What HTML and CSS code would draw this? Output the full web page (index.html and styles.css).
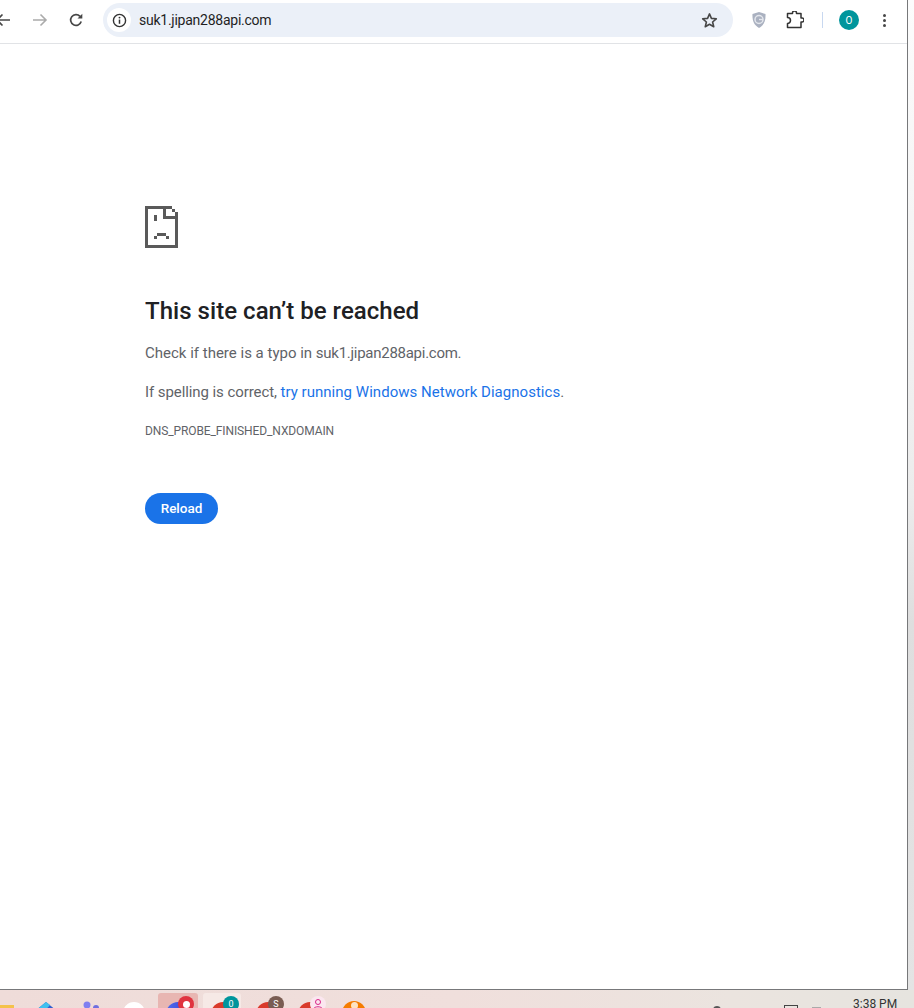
FILE: index.html
```html
<!DOCTYPE html>
<html lang="en">
<head>
<meta charset="utf-8">
<title>suk1.jipan288api.com</title>
<link rel="stylesheet" href="styles.css">
</head>
<body>
<div class="desktop">
  <div class="browser">
    <header class="toolbar">
      <svg class="nav nav-back" viewBox="0 0 16 16"><path d="M15 8H2M7.500 2.500 2 8l5.500 5.500" fill="none" stroke="#474747" stroke-width="1.600"/></svg>
      <svg class="nav nav-forward" viewBox="0 0 16 16"><path d="M1 8h13M8.500 2.500 14 8l-5.500 5.500" fill="none" stroke="#ababab" stroke-width="1.600"/></svg>
      <svg class="nav nav-reload" viewBox="0 0 16 16"><path d="M13.200 9.500A5.400 5.400 0 1 1 12 4.300" fill="none" stroke="#474747" stroke-width="1.700"/><path d="M9.500 6.500h4.800V1.700z" fill="#474747"/></svg>
      <div class="omnibox">
        <span class="info-chip">
          <svg class="info-icon" viewBox="0 0 16 16"><circle cx="8" cy="8" r="6.500" fill="none" stroke="#333" stroke-width="1.500"/><path d="M8 7v4.500" stroke="#333" stroke-width="1.600"/><circle cx="8" cy="4.900" r="1" fill="#333"/></svg>
        </span>
        <span class="url">suk1.jipan288api.com</span>
        <svg class="star" viewBox="0 0 16 16"><path d="M8 1.800 9.800 6l4.600.4-3.500 3 1.100 4.500L8 11.500l-4 2.400 1.100-4.500-3.500-3L6.200 6z" fill="none" stroke="#474747" stroke-width="1.500" stroke-linejoin="round"/></svg>
      </div>
      <svg class="shield" viewBox="0 0 16 18"><path d="M8 1 14.500 3c.3 6-1 11-6.500 14C2.500 14 1.200 9 1.500 3z" fill="#aab1c0"/><circle cx="8" cy="8.500" r="4" fill="none" stroke="#e3e6ec" stroke-width="1.500"/><path d="M8 8.500h4" stroke="#e3e6ec" stroke-width="1.400"/></svg>
      <svg class="puzzle" viewBox="0 0 18 18"><path d="M1.500 2.500H6.500V2a2 2 0 0 1 4 0v.5h4.500V7h1a2 2 0 0 1 0 4h-1v5.500H1.500V12.500a3 3 0 0 0 0-6z" fill="none" stroke="#333" stroke-width="1.500" stroke-linejoin="round"/></svg>
      <span class="divider"></span>
      <span class="avatar">O</span>
      <span class="menu"><i></i><i></i><i></i></span>
    </header>
    <main class="content">
      <svg class="sad-page" viewBox="0 0 33 42">
        <g fill="#5a5a5a">
          <rect x="0" y="0" width="27" height="3"/>
          <rect x="0" y="0" width="3" height="42"/>
          <rect x="0" y="39" width="33" height="3"/>
          <rect x="30" y="6" width="3" height="36"/>
          <rect x="18" y="0" width="3" height="13"/>
          <rect x="18" y="10" width="15" height="3"/>
          <rect x="27" y="3" width="3" height="3"/>
          <rect x="9" y="9" width="3" height="6"/>
          <rect x="12" y="27" width="9" height="3"/>
          <rect x="9" y="30" width="3" height="3"/>
          <rect x="21" y="30" width="3" height="3"/>
        </g>
      </svg>
      <h1 class="title">This site can’t be reached</h1>
      <p class="line">Check if there is a typo in <span class="domain">suk1.jipan288api.com</span>.</p>
      <p class="line"><span class="prefix">If spelling is correct, </span><a class="link" href="#">try running Windows Network Diagnostics</a>.</p>
      <p class="code">DNS_PROBE_FINISHED_NXDOMAIN</p>
      <button class="reload" type="button">Reload</button>
    </main>
  </div>
  <div class="edge"></div>
</div>
<footer class="taskbar">
  <span class="tb tb-folder"></span>
  <svg class="tb tb-copilot" viewBox="0 0 22 12"><path d="M11 0 22 9v3H0V9z" fill="#2f5fd0"/><path d="M11 0 15 3 7 12H0V9z" fill="#3fc0ee"/></svg>
  <svg class="tb tb-teams" viewBox="0 0 22 18"><circle cx="5" cy="4" r="3.500" fill="#7f7ff0"/><circle cx="14" cy="7" r="3" fill="#6f6fe0"/></svg>
  <span class="tb tb-white"></span>
  <span class="tb tb-active">
    <span class="chrome chrome-blue"></span>
    <span class="badge badge-red"><i></i></span>
  </span>
  <span class="tb tb-open">
    <span class="chrome"></span>
    <span class="badge badge-teal">0</span>
  </span>
  <span class="tb tb-s">
    <span class="chrome"></span>
    <span class="badge badge-brown">S</span>
  </span>
  <span class="tb tb-pink">
    <span class="chrome"></span>
    <span class="badge badge-pink">
      <svg class="pink-person" viewBox="0 0 16 16"><circle cx="8" cy="6" r="2.500" fill="none" stroke="#d9268a" stroke-width="1"/><path d="M3.500 13c1-3 8-3 9 0" fill="none" stroke="#d9268a" stroke-width="1"/></svg>
    </span>
  </span>
  <span class="tb tb-orange"><i></i></span>
  <span class="tray-dot"></span>
  <span class="tray-net"></span>
  <span class="tray-vol"></span>
  <span class="clock">3:38 PM</span>
</footer>
</body>
</html>
```

FILE: styles.css
```css
* { box-sizing: border-box; }
html, body { margin: 0; height: 100%; }
body {
  width: 914px;
  height: 1008px;
  overflow: hidden;
  display: flex;
  flex-direction: column;
  font-family: Roboto, "Liberation Sans", sans-serif;
  background: #efe3e0;
}
.desktop { display: flex; height: 990px; flex: none; }
.browser {
  width: 908px;
  height: 990px;
  background: #fff;
  border-right: 1px solid #77787a;
  border-bottom: 1px solid #77787a;
  display: flex;
  flex-direction: column;
}
.edge { flex: 1; background: linear-gradient(180deg, #fcfcfc 0%, #ececec 50%, #dedede 63%, #e4e4e4 100%); }
.toolbar {
  height: 44px;
  flex: none;
  border-bottom: 1px solid #e1e3e6;
  padding: 3px 0 6px;
  display: flex;
  align-items: center;
  overflow: hidden;
}
.nav { width: 16px; height: 16px; flex: none; }
.nav-back { margin-left: -5px; }
.nav-forward { margin-left: 21px; }
.nav-reload { margin-left: 20px; }
.omnibox {
  margin-left: 19px;
  width: 630px;
  height: 34px;
  flex: none;
  border-radius: 17px;
  background: #ebf0f8;
  display: flex;
  align-items: center;
  padding: 0 15px 0 4px;
}
.info-chip {
  width: 24px;
  height: 24px;
  border-radius: 50%;
  background: #fff;
  display: flex;
  align-items: center;
  justify-content: center;
  flex: none;
}
.info-icon { width: 15px; height: 15px; }
.url { margin-left: 8px; font-size: 14px; letter-spacing: -0.25px; color: #1f1f1f; flex: 1; }
.star { width: 17px; height: 17px; flex: none; }
.shield { width: 16px; height: 18px; flex: none; margin-left: 18px; }
.puzzle { width: 18px; height: 18px; flex: none; margin-left: 19px; }
.divider { width: 1px; height: 16px; background: #c8d8f0; margin-left: 18px; flex: none; }
.avatar {
  width: 20px;
  height: 20px;
  margin-left: 16px;
  border-radius: 50%;
  background: #00959c;
  color: #fff;
  font-size: 10px;
  display: flex;
  align-items: center;
  justify-content: center;
  flex: none;
}
.menu {
  margin-left: 24px;
  width: 3px;
  display: flex;
  flex-direction: column;
  gap: 2px;
  flex: none;
}
.menu i { width: 3px; height: 3px; border-radius: 50%; background: #474747; }
.content { flex: 1; padding: 162px 0 0 145px; display: flex; flex-direction: column; align-items: flex-start; }
.sad-page { width: 33px; height: 42px; display: block; }
.title {
  margin: 48px 0 0;
  font-size: 24px;
  font-weight: 500;
  line-height: 30px;
  letter-spacing: 0.04px;
  color: #202124;
}
.line {
  margin: 16px 0 0;
  font-size: 15px;
  line-height: 22px;
  color: #5f6368;
}
.line + .line { margin-top: 17px; }
.domain { letter-spacing: -0.27px; }
.prefix { letter-spacing: -0.08px; }
.link { color: #1a73e8; text-decoration: none; letter-spacing: 0.03px; }
.code {
  margin: 20px 0 0;
  font-size: 12px;
  line-height: 16px;
  letter-spacing: -0.11px;
  color: #5f6368;
}
.reload {
  margin-top: 54px;
  width: 73px;
  height: 31px;
  padding: 0 0 2px;
  border: 0;
  border-radius: 16px;
  background: #1a73e8;
  color: #fff;
  font: 500 13.5px Roboto, sans-serif;
}
.taskbar {
  height: 18px;
  flex: none;
  position: relative;
  overflow: hidden;
  background: linear-gradient(90deg, #efdcd9 0%, #f0dfdc 50%, #ebe4df 80%, #e6e4df 100%);
}
.tb { position: absolute; display: block; }
.tb-folder { left: 0; top: 15px; width: 14px; height: 12px; background: #f4c24a; }
.tb-copilot { left: 35px; top: 12px; width: 22px; height: 12px; }
.tb-teams { left: 82px; top: 11px; width: 22px; height: 18px; }
.tb-white { left: 123px; top: 12px; width: 22px; height: 22px; border-radius: 50%; background: #fff; }
.tb-active { left: 158px; top: 3px; width: 40px; height: 20px; background: #e8b6b2; border-radius: 3px 3px 0 0; }
.tb-open { left: 203px; top: 3px; width: 38px; height: 20px; background: #f6e9e6; border-radius: 3px 3px 0 0; }
.tb-s { left: 248px; top: 3px; width: 38px; height: 20px; }
.tb-pink { left: 290px; top: 3px; width: 38px; height: 20px; }
.tb-orange { left: 342px; top: 11px; width: 24px; height: 24px; border-radius: 50%; background: #f57c00; display: flex; justify-content: center; }
.tb-orange i { width: 7px; height: 7px; margin-top: 1px; border-radius: 50%; background: #fde3c4; }
.chrome { position: absolute; left: 8px; top: 9px; width: 24px; height: 24px; border-radius: 50%; background: #d93a2b; }
.chrome-blue { background: linear-gradient(90deg, #4f6ff0, #3c3fd0); }
.badge {
  position: absolute;
  left: 20px;
  top: 3px;
  width: 16px;
  height: 16px;
  border-radius: 50%;
  color: #fff;
  font-size: 9px;
  display: flex;
  align-items: center;
  justify-content: center;
}
.badge-red { background: #e0333f; }
.badge-red i { width: 7px; height: 7px; border-radius: 50%; background: #fff; }
.badge-teal { background: #00959c; }
.badge-brown { background: #7a5c52; }
.badge-pink { background: #fbe6ef; }
.pink-person { width: 16px; height: 16px; }
.tray-dot { position: absolute; left: 713px; top: 16px; width: 8px; height: 8px; border-radius: 50%; background: #555; }
.tray-net { position: absolute; left: 784px; top: 15px; width: 14px; height: 10px; border: 1px solid #444; }
.tray-vol { position: absolute; left: 812px; top: 17px; width: 9px; height: 6px; background: #aaa; }
.clock { position: absolute; left: 853px; top: 7px; font-size: 12px; line-height: 14px; color: #333; }
```
